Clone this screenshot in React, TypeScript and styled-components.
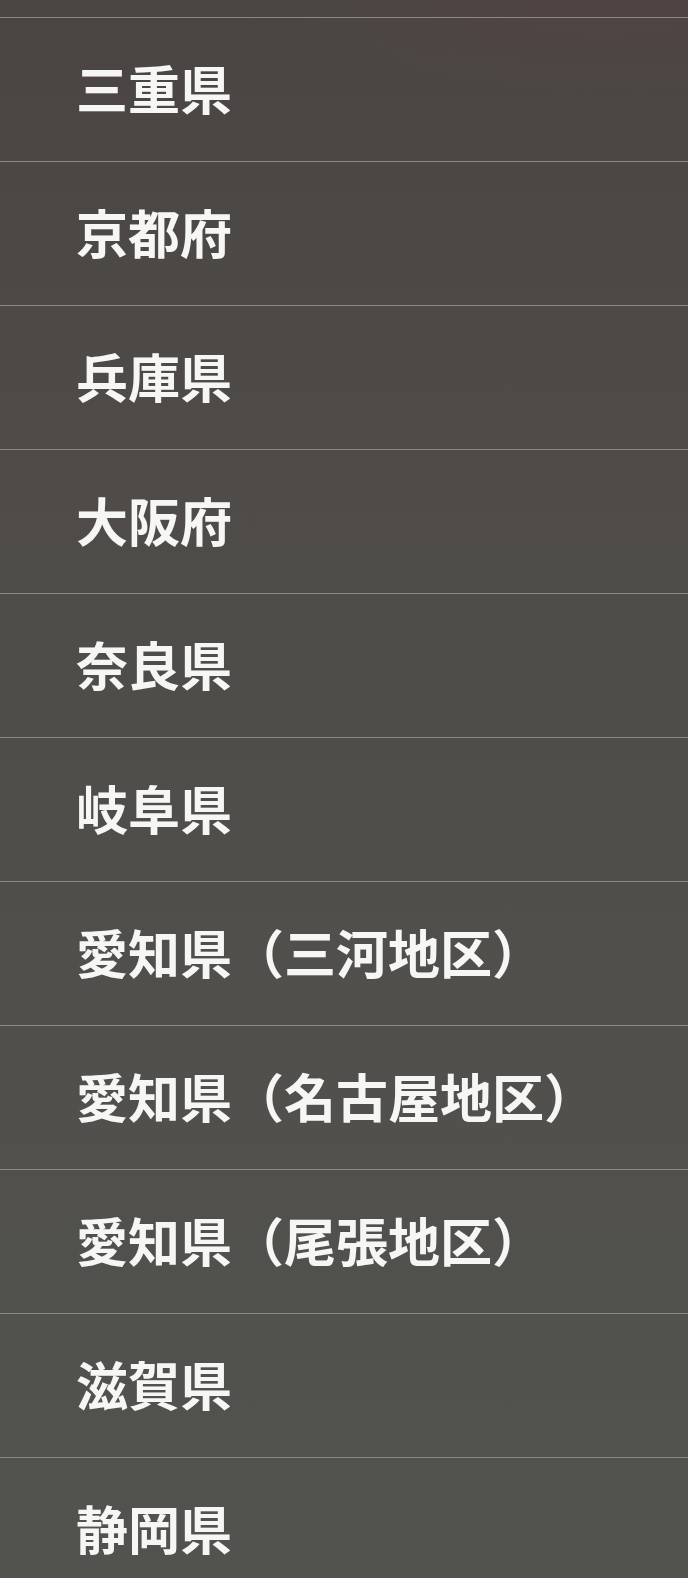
import React from 'react';
import styled, { createGlobalStyle } from 'styled-components';

const prefectures = [
    '三重県',
    '京都府',
    '兵庫県',
    '大阪府',
    '奈良県',
    '岐阜県',
    '愛知県（三河地区）',
    '愛知県（名古屋地区）',
    '愛知県（尾張地区）',
    '滋賀県',
    '静岡県',
];

const App = () => {
    return (
        <>
            <GlobalStyle />
            <Screen>
                <TopStrip />
                <List>
                    {prefectures.map((name) => (
                        <Row key={name}>
                            <Label>{name}</Label>
                        </Row>
                    ))}
                </List>
            </Screen>
        </>
    );
};

const GlobalStyle = createGlobalStyle`
    html, body {
        margin: 0;
        padding: 0;
        background: #4f4d4a;
    }
`;

const Screen = styled.div`
    width: 688px;
    height: 1578px;
    overflow: hidden;
    background:
        radial-gradient(
            ellipse 45% 6% at 88% 0%,
            rgba(88, 66, 64, 0.45) 0%,
            rgba(88, 66, 64, 0) 100%
        ),
        linear-gradient(
            180deg,
            #4a4543 0%,
            #4e4b48 30%,
            #504f4c 60%,
            #52524f 100%
        );
    font-family: 'Noto Sans CJK JP', 'Noto Sans', sans-serif;
`;

const TopStrip = styled.div`
    height: 17px;
`;

const List = styled.ul`
    list-style: none;
    margin: 0;
    padding: 0;
`;

const Row = styled.li`
    box-sizing: border-box;
    height: 144px;
    border-top: 1px solid #8c8886;
    display: flex;
    align-items: center;
    padding: 0 0 4px 76px;
`;

const Label = styled.span`
    color: #f6f6f5;
    font-size: 52px;
    font-weight: 700;
    line-height: 1;
`;

export default App;
